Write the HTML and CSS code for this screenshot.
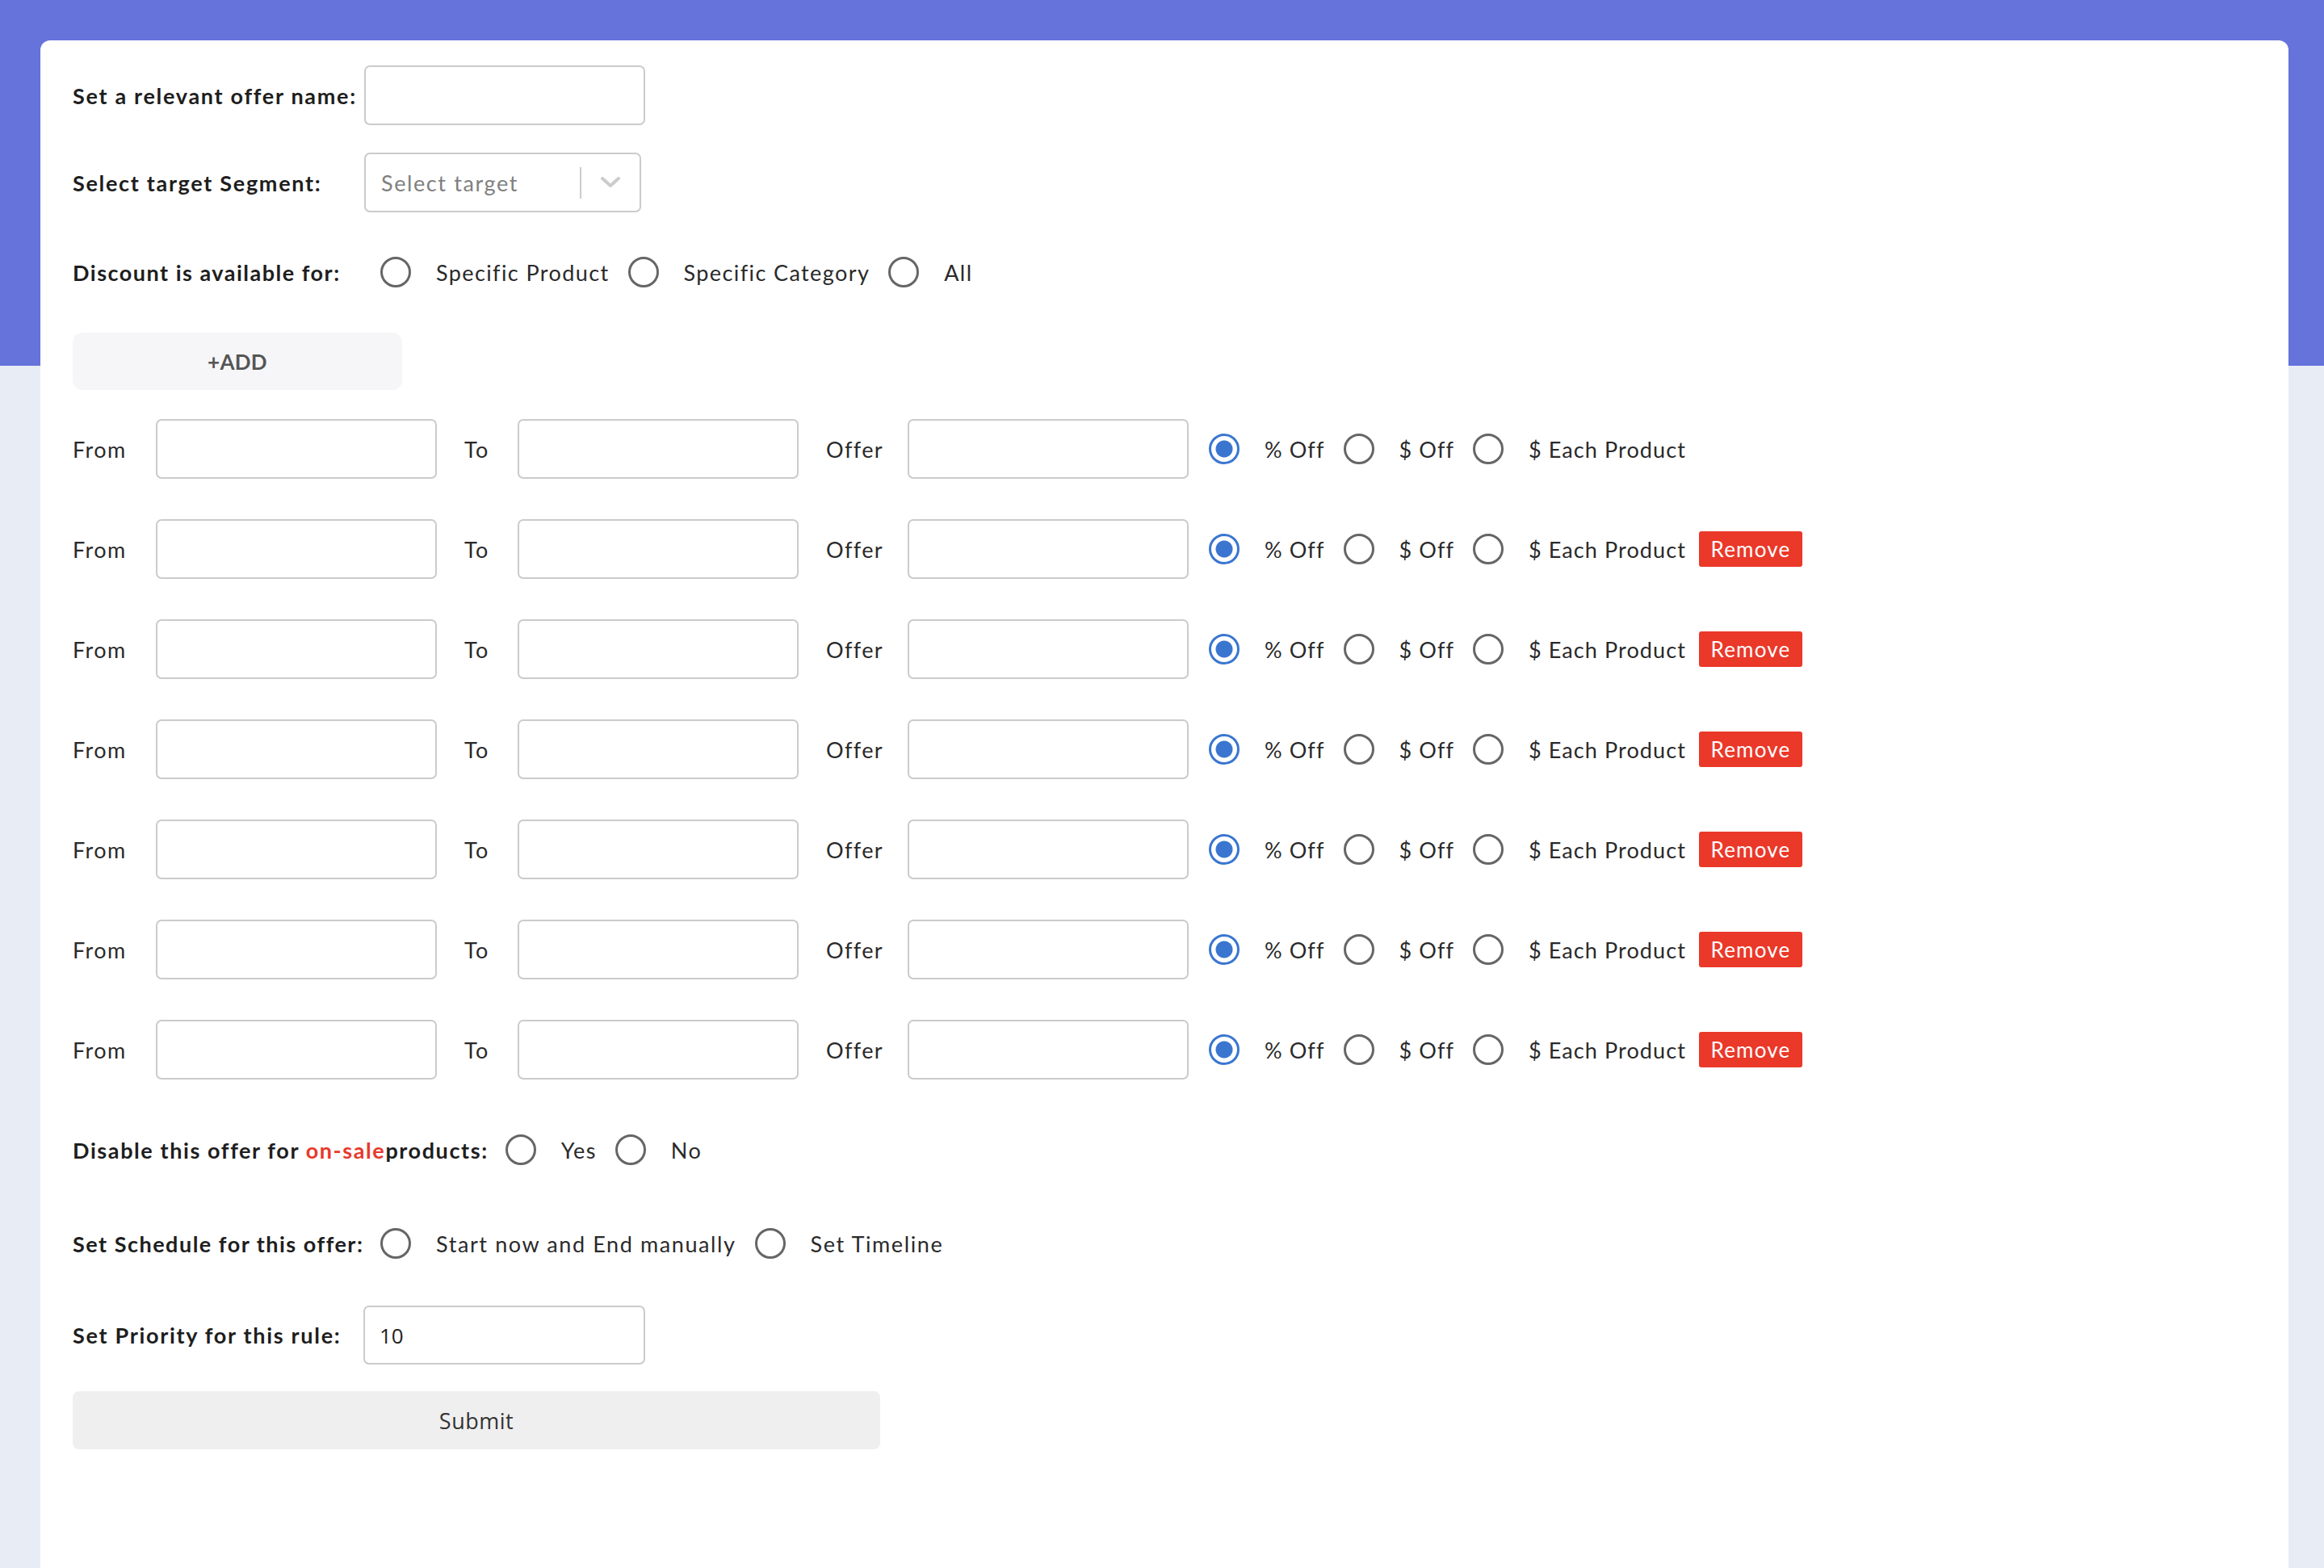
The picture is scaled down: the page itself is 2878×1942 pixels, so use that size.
FILE: index.html
```html
<!DOCTYPE html>
<html lang="en">
<head>
<meta charset="utf-8">
<title>Offer</title>
<link rel="stylesheet" href="styles.css">
</head>
<body>
<main class="card">
  <div class="field">
    <label class="field-label">Set a relevant offer name:</label>
    <input class="text-input" type="text">
  </div>
  <div class="field row-segment">
    <label class="field-label">Select target Segment:</label>
    <div class="select">
      <span class="select-placeholder">Select target</span>
      <span class="select-sep"></span>
      <span class="select-arrow"><svg width="26" height="16" viewBox="0 0 26 16"><path d="M3 3 L13 12 L23 3" fill="none" stroke="#cccccc" stroke-width="4" stroke-linecap="round" stroke-linejoin="round"/></svg></span>
    </div>
  </div>
  <div class="field row-choice row-discount">
    <span class="field-label choice-label">Discount is available for:</span>
    <span class="radio"></span><span class="opt-text">Specific Product</span>
    <span class="radio"></span><span class="opt-text">Specific Category</span>
    <span class="radio"></span><span class="opt-text">All</span>
  </div>
  <button class="add-btn" type="button">+ADD</button>

  <div class="tiers">
    <div class="tier">
      <span class="tier-label tier-from">From</span><input class="text-input" type="text">
      <span class="tier-label tier-to">To</span><input class="text-input" type="text">
      <span class="tier-label tier-offer">Offer</span><input class="text-input" type="text">
      <span class="tier-options">
        <span class="radio checked"></span><span class="opt-text">% Off</span>
        <span class="radio"></span><span class="opt-text">$ Off</span>
        <span class="radio"></span><span class="opt-text opt-last">$ Each Product</span>
      </span>
    </div>
    <div class="tier">
      <span class="tier-label tier-from">From</span><input class="text-input" type="text">
      <span class="tier-label tier-to">To</span><input class="text-input" type="text">
      <span class="tier-label tier-offer">Offer</span><input class="text-input" type="text">
      <span class="tier-options">
        <span class="radio checked"></span><span class="opt-text">% Off</span>
        <span class="radio"></span><span class="opt-text">$ Off</span>
        <span class="radio"></span><span class="opt-text opt-last">$ Each Product</span>
        <button class="remove-btn" type="button">Remove</button>
      </span>
    </div>
    <div class="tier">
      <span class="tier-label tier-from">From</span><input class="text-input" type="text">
      <span class="tier-label tier-to">To</span><input class="text-input" type="text">
      <span class="tier-label tier-offer">Offer</span><input class="text-input" type="text">
      <span class="tier-options">
        <span class="radio checked"></span><span class="opt-text">% Off</span>
        <span class="radio"></span><span class="opt-text">$ Off</span>
        <span class="radio"></span><span class="opt-text opt-last">$ Each Product</span>
        <button class="remove-btn" type="button">Remove</button>
      </span>
    </div>
    <div class="tier">
      <span class="tier-label tier-from">From</span><input class="text-input" type="text">
      <span class="tier-label tier-to">To</span><input class="text-input" type="text">
      <span class="tier-label tier-offer">Offer</span><input class="text-input" type="text">
      <span class="tier-options">
        <span class="radio checked"></span><span class="opt-text">% Off</span>
        <span class="radio"></span><span class="opt-text">$ Off</span>
        <span class="radio"></span><span class="opt-text opt-last">$ Each Product</span>
        <button class="remove-btn" type="button">Remove</button>
      </span>
    </div>
    <div class="tier">
      <span class="tier-label tier-from">From</span><input class="text-input" type="text">
      <span class="tier-label tier-to">To</span><input class="text-input" type="text">
      <span class="tier-label tier-offer">Offer</span><input class="text-input" type="text">
      <span class="tier-options">
        <span class="radio checked"></span><span class="opt-text">% Off</span>
        <span class="radio"></span><span class="opt-text">$ Off</span>
        <span class="radio"></span><span class="opt-text opt-last">$ Each Product</span>
        <button class="remove-btn" type="button">Remove</button>
      </span>
    </div>
    <div class="tier">
      <span class="tier-label tier-from">From</span><input class="text-input" type="text">
      <span class="tier-label tier-to">To</span><input class="text-input" type="text">
      <span class="tier-label tier-offer">Offer</span><input class="text-input" type="text">
      <span class="tier-options">
        <span class="radio checked"></span><span class="opt-text">% Off</span>
        <span class="radio"></span><span class="opt-text">$ Off</span>
        <span class="radio"></span><span class="opt-text opt-last">$ Each Product</span>
        <button class="remove-btn" type="button">Remove</button>
      </span>
    </div>
    <div class="tier">
      <span class="tier-label tier-from">From</span><input class="text-input" type="text">
      <span class="tier-label tier-to">To</span><input class="text-input" type="text">
      <span class="tier-label tier-offer">Offer</span><input class="text-input" type="text">
      <span class="tier-options">
        <span class="radio checked"></span><span class="opt-text">% Off</span>
        <span class="radio"></span><span class="opt-text">$ Off</span>
        <span class="radio"></span><span class="opt-text opt-last">$ Each Product</span>
        <button class="remove-btn" type="button">Remove</button>
      </span>
    </div>
  </div>

  <div class="field row-choice row-disable">
    <span class="field-label disable-label">Disable this offer for <span class="sale">on-sale</span>products:</span>
    <span class="radio"></span><span class="opt-text">Yes</span>
    <span class="radio"></span><span class="opt-text">No</span>
  </div>
  <div class="field row-choice row-schedule">
    <span class="field-label choice-label">Set Schedule for this offer:</span>
    <span class="radio"></span><span class="opt-text sched-text">Start now and End manually</span>
    <span class="radio"></span><span class="opt-text sched-text">Set Timeline</span>
  </div>
  <div class="field row-priority">
    <label class="field-label priority-label">Set Priority for this rule:</label>
    <input class="text-input priority-input" type="text" value="10">
  </div>
  <button class="submit-btn" type="button">Submit</button>
</main>
</body>
</html>
```
FILE: styles.css
```css
* { box-sizing: border-box; }
html, body { margin: 0; padding: 0; }
body {
  min-height: 1942px;
  font-family: Lato, "Open Sans", sans-serif;
  color: #222222;
  background: linear-gradient(to bottom, #6573db 0, #6573db 453px, #e8ecf4 453px, #e8ecf4 100%);
}
.card {
  margin: 50px 44px 0 50px;
  min-height: 1892px;
  padding: 31px 40px 0;
  background: #ffffff;
  border-radius: 12px 12px 0 0;
}
.field { display: flex; align-items: center; }
.field-label {
  flex: 0 0 361px;
  font-size: 27px;
  font-weight: 700;
  letter-spacing: 1.7px;
  white-space: nowrap;
  color: #1e1e1e;
}
.text-input {
  width: 348px;
  height: 74px;
  flex: none;
  margin: 0;
  padding: 0 18px;
  border: 2px solid #cbcbcb;
  border-radius: 7px;
  background: #ffffff;
  font-family: "Open Sans", sans-serif;
  font-size: 26px;
  color: #222222;
  outline: none;
}
.row-segment { margin-top: 34px; }
.select {
  width: 343px;
  height: 74px;
  display: flex;
  align-items: center;
  padding-left: 19px;
  border: 2px solid #cbcbcb;
  border-radius: 7px;
}
.select-placeholder {
  flex: 1;
  font-size: 27px;
  letter-spacing: 1.6px;
  color: #808080;
  white-space: nowrap;
}
.select-sep { width: 2px; height: 39px; background: #cccccc; }
.select-arrow { width: 72px; display: flex; justify-content: center; align-items: center; }
.select-arrow svg { display: block; }

.row-choice { height: 40px; }
.row-discount { margin-top: 54px; }
.choice-label { flex: 0 0 381px; letter-spacing: 1.5px; }
.radio {
  flex: none;
  width: 38px;
  height: 38px;
  margin-right: 31px;
  border: 3px solid #666666;
  border-radius: 50%;
}
.radio.checked {
  border-color: #3a76d0;
  background: radial-gradient(circle at center, #3a76d0 0, #3a76d0 10px, #ffffff 11px);
}
.opt-text {
  font-size: 27px;
  letter-spacing: 1.4px;
  color: #2a2a2a;
  margin-right: 23px;
  white-space: nowrap;
}
.sched-text { letter-spacing: 1.6px; }
.add-btn {
  display: block;
  margin-top: 55px;
  width: 408px;
  height: 71px;
  border: none;
  border-radius: 12px;
  background: #f6f6f8;
  font-family: Lato, sans-serif;
  font-size: 26px;
  font-weight: 700;
  letter-spacing: 0.3px;
  color: #555555;
  padding: 0;
}

.tiers { margin-top: 36px; display: flex; flex-direction: column; gap: 50px; }
.tier { display: flex; align-items: center; height: 74px; }
.tier-label {
  flex: none;
  font-size: 27px;
  letter-spacing: 1.4px;
  color: #2a2a2a;
  white-space: nowrap;
}
.tier-from { width: 103px; }
.tier-to { width: 66px; margin-left: 34px; }
.tier-offer { width: 101px; margin-left: 34px; }
.tier-options { display: flex; align-items: center; margin-left: 25px; }
.tier-options .opt-text { letter-spacing: 1.1px; }
.tier-options .opt-last { margin-right: 16px; }
.remove-btn {
  height: 44px;
  width: 128px;
  padding: 0;
  border: none;
  border-radius: 3px;
  background: #ea3829;
  color: #ffffff;
  font-family: Lato, sans-serif;
  font-size: 26px;
  letter-spacing: 1.2px;
}

.row-disable { margin-top: 67px; }
.disable-label { flex: none; margin-right: 21px; letter-spacing: 1.6px; }
.sale { color: #e8392b; }
.row-schedule { margin-top: 76px; }
.row-priority { margin-top: 57px; }
.priority-label { flex-basis: 360px; }
.priority-input { width: 349px; height: 73px; }
.submit-btn {
  display: block;
  margin-top: 33px;
  width: 1000px;
  height: 72px;
  padding: 0;
  border: none;
  border-radius: 8px;
  background: #efefef;
  font-family: "Open Sans", sans-serif;
  font-size: 27px;
  letter-spacing: 0.5px;
  color: #333333;
}
```
